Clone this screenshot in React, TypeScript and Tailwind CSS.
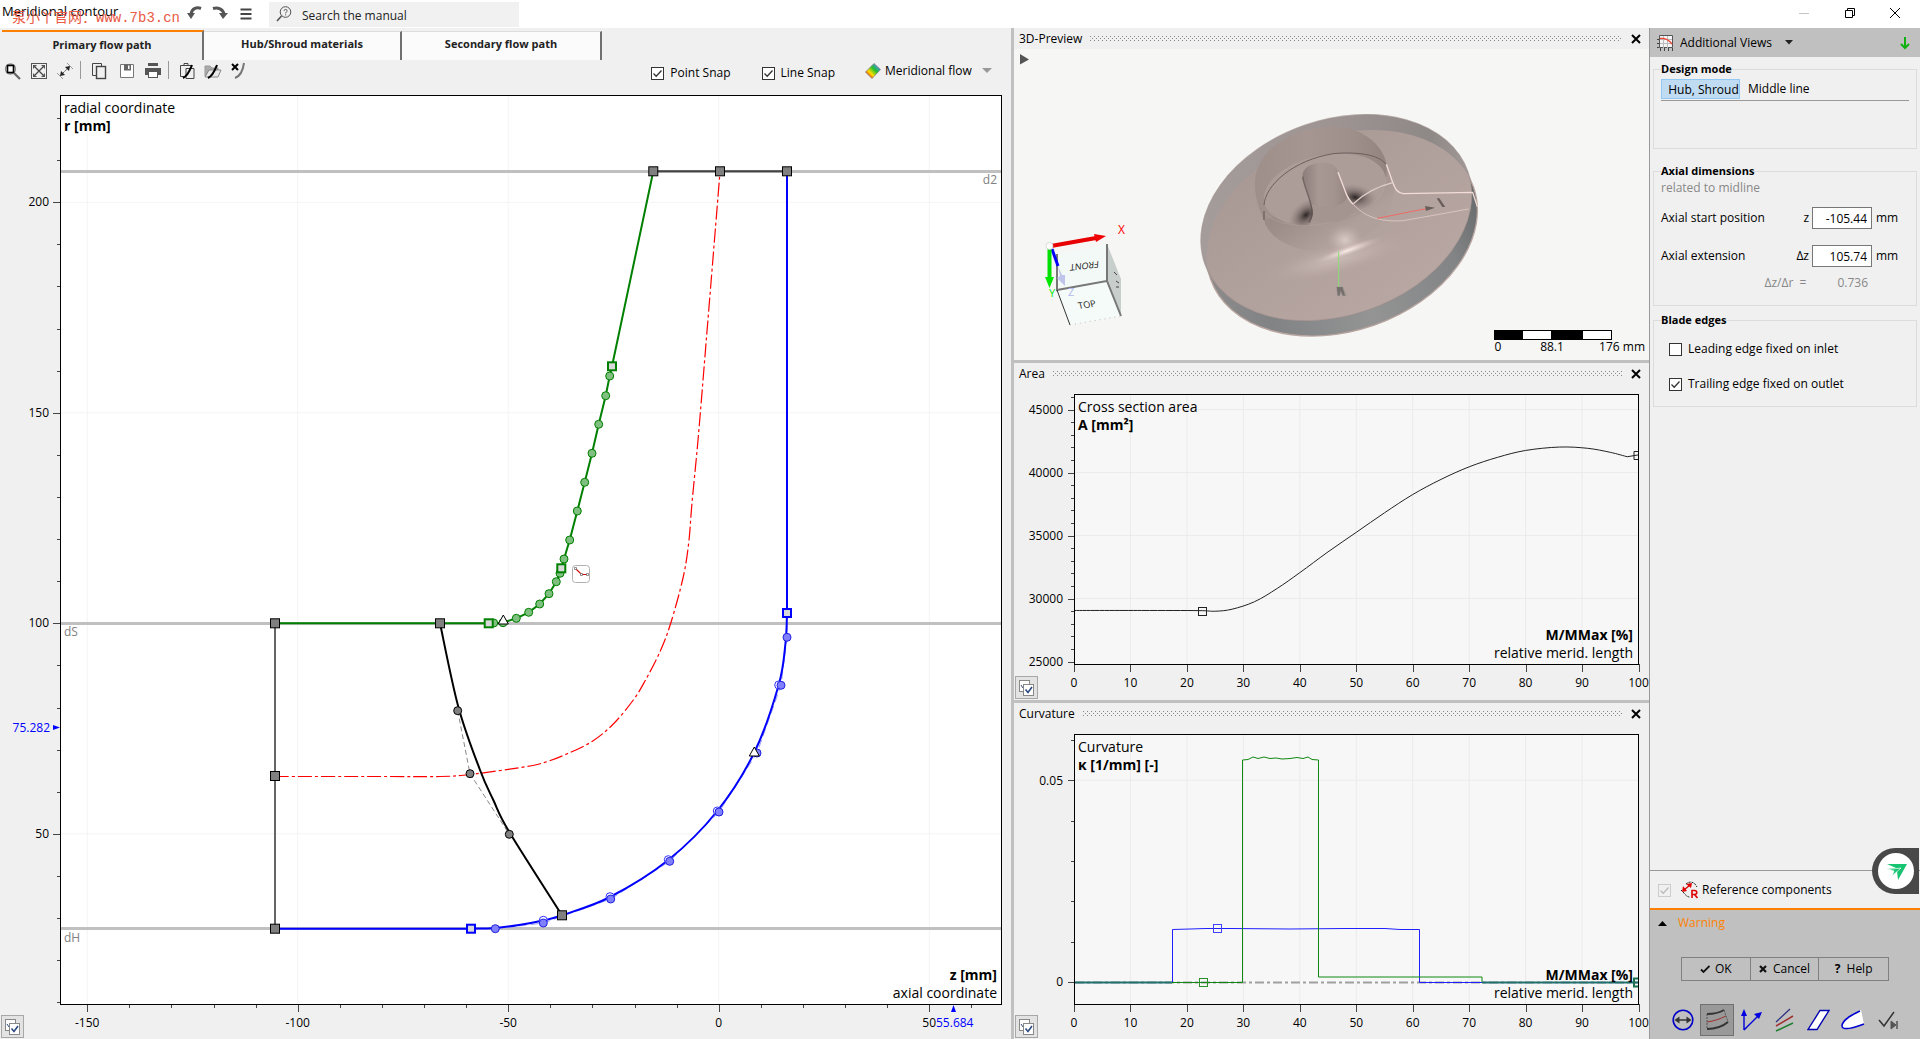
import { useState } from 'react'
import type { ReactNode } from 'react'

type Pt = [number, number]

const LEFT_R = [200, 150, 100, 50]
const LEFT_Z = [-150, -100, -50, 0, 50]
const PERCENT = [0, 10, 20, 30, 40, 50, 60, 70, 80, 90, 100]

const zx = (z: number) => 718.7 + z * 4.21
const ry = (r: number) => 623.3 - (r - 100) * 4.21
const px = (p: number) => 1074 + p * 5.645
const ay = (a: number) => 661.5 - (a - 25000) * 0.0126
const ky = (k: number) => 982 - k * 4034

// Catmull-Rom through the given points
function smooth(pts: Pt[]): string {
  let d = `M${pts[0][0]},${pts[0][1]}`
  for (let i = 0; i < pts.length - 1; i++) {
    const a = pts[i - 1] ?? pts[i]
    const b = pts[i]
    const c = pts[i + 1]
    const e = pts[i + 2] ?? c
    d += ` C${b[0] + (c[0] - a[0]) / 6},${b[1] + (c[1] - a[1]) / 6} ${c[0] - (e[0] - b[0]) / 6},${c[1] - (e[1] - b[1]) / 6} ${c[0]},${c[1]}`
  }
  return d
}

const poly = (pts: Pt[]) => pts.map((p) => p.join(',')).join(' ')

const SHROUD: Pt[] = [
  [493.7, 623], [503, 622.7], [516.3, 618.3], [528.7, 612.3], [539.7, 604], [549, 593.7], [556.3, 581.7], [560, 573.3],
  [564, 559], [569.7, 540], [577.3, 511], [584.7, 482.3], [592, 453.3], [598.7, 424.3], [605.7, 395.7], [609.7, 376],
]
const SHROUD_LINE: Pt[] = [[275, 623.3], [488.7, 623.3], ...SHROUD, [612, 366.3], [653.3, 171.3]]
const SHROUD_KNOTS: Pt[] = [[488.7, 623.3], [561.3, 568.3], [612, 366.3]]

const HUB_FIT: Pt[] = [
  [471, 928.7], [495, 928], [519, 925], [543, 920.5], [562, 915.3], [610, 897], [668.3, 860], [717.3, 811],
  [754.5, 752], [778.7, 685], [785.5, 643], [787, 613],
]
const HUB_CTRL: Pt[] = [
  [495.3, 928.7], [543.3, 923], [610.7, 899], [669.7, 861.3], [719, 812], [757, 753], [781, 685.3], [787, 637.3],
]
const HUB_RINGS: Pt[] = [[543.3, 920.3], [610, 896.7], [668.3, 859.7], [717.3, 811], [778.7, 685]]
const HUB_KNOTS: Pt[] = [[471, 928.7], [787, 613]]

const MIDLINE: Pt[] = [
  [275, 776.5], [380, 776.5], [440, 776.5], [470, 774.5], [526, 766.7], [546.7, 761.7], [566.7, 754], [591.7, 741.7],
  [613.3, 724], [633.3, 700], [645, 681], [660, 651.7], [670.7, 623.3], [683, 578], [688.7, 543], [692, 503],
  [698.3, 436.7], [706.3, 340], [718, 196.7], [720, 171.3],
]
const EDGE: Pt[] = [[440, 623.3], [458.3, 706.7], [480, 770], [493.3, 800], [509.3, 832], [562, 915.3]]
const EDGE_CTRL: Pt[] = [[457.7, 710.7], [470, 773.7], [509.3, 834.3]]
const ANCHORS: Pt[] = [
  [653.3, 171.3], [720, 171.3], [787, 171.3], [275, 623.3], [440, 623.3], [275, 776], [275, 928.7], [562, 915.3],
]

const AREA: Pt[] = [
  [0, 29050], [12, 29050], [22, 29040], [25, 28990], [28, 29150], [32, 29750], [36, 30800], [40, 32050], [45, 33700],
  [50, 35250], [55, 36800], [60, 38250], [65, 39450], [70, 40450], [75, 41200], [80, 41750], [86, 42020], [91, 41920],
  [95, 41600], [98, 41250],
]

function Knot({ at, stroke, fill = '#d9d9d9', size = 8 }: { at: Pt; stroke: string; fill?: string; size?: number }) {
  return (
    <rect x={at[0] - size / 2} y={at[1] - size / 2} width={size} height={size} fill={fill} stroke={stroke} strokeWidth={size === 8 ? 2 : 1} />
  )
}

function Triangle({ at }: { at: Pt }) {
  return <path d={`M${at[0]},${at[1] - 6} l5,9 h-10 z`} fill="#fff" stroke="#000" />
}

function MeridionalChart() {
  return (
    <svg viewBox="0 90 1011 949" preserveAspectRatio="xMinYMin meet" className="h-full w-full font-['Open_Sans',sans-serif]">
      <rect x="60.5" y="95.5" width="941" height="909" fill="#fff" />
      <g stroke="#f4f4f4">
        {LEFT_Z.map((z) => <line key={z} x1={zx(z)} x2={zx(z)} y1="96" y2="1004" />)}
        {LEFT_R.map((r) => <line key={r} x1="61" x2="1001" y1={ry(r)} y2={ry(r)} />)}
      </g>
      <g stroke="#c0c0c0" strokeWidth="3">
        <path d="M61,171.5 H1001 M61,623.5 H1001 M61,928.5 H1001" />
      </g>
      <g className="text-[12px]" fill="#808080">
        <text x="997" y="184" textAnchor="end">d2</text>
        <text x="64" y="636">dS</text>
        <text x="64" y="942">dH</text>
      </g>
      <rect x="60.5" y="95.5" width="941" height="909" fill="none" stroke="#000" />

      {/* Axis ticks */}
      <g stroke="#444">
        {Array.from({ length: 22 }, (_, i) => 10 + i * 10).map((r) => (
          <line key={r} x1={r % 50 === 0 ? 53 : 57} x2="60" y1={Math.round(ry(r)) + 0.5} y2={Math.round(ry(r)) + 0.5} />
        ))}
        {Array.from({ length: 22 }, (_, i) => -150 + i * 10).map((z) => (
          <line key={z} x1={Math.round(zx(z)) + 0.5} x2={Math.round(zx(z)) + 0.5} y1="1005" y2={z % 50 === 0 ? 1012 : 1008} />
        ))}
      </g>
      <g className="text-[12px]" fill="#000">
        {LEFT_R.map((r) => <text key={r} x="49" y={ry(r) + 4} textAnchor="end">{r}</text>)}
        {LEFT_Z.map((z) => <text key={z} x={zx(z)} y="1027" textAnchor="middle">{z}</text>)}
      </g>
      <g className="text-[12px]" fill="#00f">
        <text x="50" y="732" textAnchor="end">75.282</text>
        <text x="936" y="1027">55.684</text>
        <path d="M53,725 L60,727.5 L53,730 z M951,1012 L953.5,1005 L956,1012 z" />
      </g>

      {/* Contours */}
      <path d="M275,623.3 V928.7" stroke="#666" strokeWidth="2" />
      <path d="M653,171.3 H787" stroke="#444" strokeWidth="2" />
      <path d={smooth(MIDLINE)} fill="none" stroke="#f00" strokeWidth="1.2" strokeDasharray="14 3 3 3" />
      <polyline points={poly(EDGE_CTRL)} fill="none" stroke="#888" strokeDasharray="5 3" />
      <path d={smooth(EDGE)} fill="none" stroke="#000" strokeWidth="2" />
      <polyline points={poly(SHROUD_LINE)} fill="none" stroke="#008000" strokeWidth="2" />
      <polyline points={poly([HUB_KNOTS[0], ...HUB_CTRL, HUB_KNOTS[1]])} fill="none" stroke="#9a9af5" strokeDasharray="8 4" />
      <path d={`${smooth(HUB_FIT)} V171.3 M275,928.7 H471`} fill="none" stroke="#00f" strokeWidth="2" />

      {SHROUD.map((p, i) => <circle key={i} cx={p[0]} cy={p[1]} r="4" fill="#7fbf7f" stroke="#008000" />)}
      {SHROUD_KNOTS.map((p, i) => <Knot key={i} at={p} stroke="#008000" />)}
      {HUB_RINGS.map((p, i) => <circle key={i} cx={p[0]} cy={p[1]} r="4" fill="#fff" stroke="#3030ff" />)}
      {HUB_CTRL.map((p, i) => <circle key={i} cx={p[0]} cy={p[1]} r="4" fill="#8080ff" stroke="#2020e0" />)}
      {HUB_KNOTS.map((p, i) => <Knot key={i} at={p} stroke="#00f" />)}
      {EDGE_CTRL.map((p, i) => <circle key={i} cx={p[0]} cy={p[1]} r="4" fill="#808080" stroke="#000" />)}
      {ANCHORS.map((p, i) => <Knot key={i} at={p} stroke="#000" fill="#808080" size={9} />)}
      <Triangle at={[503.3, 621]} />
      <Triangle at={[754.3, 753]} />

      {/* Spline mode hint beside the pointer */}
      <rect x="572.5" y="565.5" width="17" height="17" rx="3" fill="#fff" stroke="#b0b0b0" />
      <path d="M575.5,568.5 L581.5,574.5 H588" fill="none" stroke="#d00000" strokeWidth="1.2" />
      <path d="M574.5,567.5 h2 v2 h-2z M580.5,573.5 h2 v2 h-2z M586.5,573.5 h2 v2 h-2z" fill="#fff" stroke="#666" strokeWidth=".7" />

      <text x="64" y="113" className="text-[14px]">radial coordinate</text>
      <text x="64" y="131" className="text-[14px] font-bold">r [mm]</text>
      <text x="997" y="980" textAnchor="end" className="text-[14px] font-bold">z [mm]</text>
      <text x="997" y="998" textAnchor="end" className="text-[14px]">axial coordinate</text>
    </svg>
  )
}

function PercentFrame({ top, bottom, children }: { top: number; bottom: number; children: ReactNode }) {
  return (
    <>
      <rect x="1074.5" y={top + 0.5} width="564" height={bottom - top} fill="#f7f7f7" />
      <g stroke="#ebebeb">
        {PERCENT.slice(1, 10).map((p) => <line key={p} x1={px(p)} x2={px(p)} y1={top + 1} y2={bottom} />)}
      </g>
      <g stroke="#444">
        {PERCENT.map((p) => <line key={p} x1={Math.round(px(p)) + 0.5} x2={Math.round(px(p)) + 0.5} y1={bottom} y2={bottom + 8} />)}
      </g>
      <g className="text-[12px]">
        {PERCENT.map((p) => <text key={p} x={px(p)} y={bottom + 23} textAnchor="middle">{p}</text>)}
      </g>
      {children}
      <rect x="1074.5" y={top + 0.5} width="564" height={bottom - top} fill="none" stroke="#000" />
      <text x="1633" y={bottom - 24} textAnchor="end" className="text-[14px] font-bold">M/MMax [%]</text>
      <text x="1633" y={bottom - 6} textAnchor="end" className="text-[14px]">relative merid. length</text>
    </>
  )
}

function AreaChart() {
  const curve = smooth(AREA.map(([p, a]) => [px(p), ay(a)]))
  return (
    <svg viewBox="1014 384 634 316" preserveAspectRatio="xMinYMin meet" className="h-full w-full font-['Open_Sans',sans-serif]">
      <PercentFrame top={394} bottom={664}>
        <g stroke="#ebebeb">
          {[30000, 35000, 40000, 45000].map((a) => <line key={a} x1="1075" x2="1638" y1={ay(a)} y2={ay(a)} />)}
        </g>
        <g stroke="#444">
          {Array.from({ length: 22 }, (_, i) => 25000 + i * 1000).map((a) => (
            <line key={a} x1={a % 5000 === 0 ? 1068 : 1071} x2="1074" y1={Math.round(ay(a)) + 0.5} y2={Math.round(ay(a)) + 0.5} />
          ))}
        </g>
        <g className="text-[12px]">
          {[25000, 30000, 35000, 40000, 45000].map((a) => <text key={a} x="1063" y={ay(a) + 4} textAnchor="end">{a}</text>)}
        </g>
        <path d={`${curve} L${px(100)},${ay(41400)}`} fill="none" stroke="#222" />
        <rect x="1198.500" y="607.500" width="8" height="8" fill="none" stroke="#222" />
        <path d="M1639,451.500 h-5 v8 h5" fill="none" stroke="#222" />
      </PercentFrame>
      <text x="1078" y="412" className="text-[14px]">Cross section area</text>
      <text x="1078" y="430" className="text-[14px] font-bold">A [mm²]</text>
    </svg>
  )
}

function CurvatureChart() {
  return (
    <svg viewBox="1014 724 634 315" preserveAspectRatio="xMinYMin meet" className="h-full w-full font-['Open_Sans',sans-serif]">
      <PercentFrame top={734} bottom={1004}>
        <line x1="1075" x2="1638" y1={ky(0.05)} y2={ky(0.05)} stroke="#ebebeb" />
        <g stroke="#444">
          {[0, 1, 2, 3, 4, 5, 6].map((k) => (
            <line key={k} x1={k % 5 === 0 ? 1068 : 1071} x2="1074" y1={Math.round(ky(k / 100)) + 0.5} y2={Math.round(ky(k / 100)) + 0.5} />
          ))}
        </g>
        <g className="text-[12px]">
          <text x="1063" y="785" textAnchor="end">0.05</text>
          <text x="1063" y="986" textAnchor="end">0</text>
        </g>
        <path d="M1075,982.500 H1638" stroke="#a0a0a0" strokeWidth="2" strokeDasharray="9 3 3 3" />
        <path d="M1075,982.500 H1172.500 V929.500 L1190,929 L1206,928.500 H1232 L1290,929 L1345,928.500 L1385,928.500 L1400,929.500 H1419.500 V982.500 H1638" fill="none" stroke="#2020ff" />
        <path d="M1075,982.500 H1242.500 V760 L1248,759.500 L1253,757 L1258,758.500 L1264,757 L1270,758.500 L1276,758 L1282,759 L1290,758.500 L1297,757.500 L1303,758.500 L1308,757 L1312,759.500 L1318.500,760 V977 H1482 V982.500 H1638" fill="none" stroke="#118811" />
        <path d="M1075,982.500 H1172 M1482,982.500 H1638" stroke="#207070" strokeWidth="2" />
        <rect x="1213.500" y="924.500" width="8" height="8" fill="none" stroke="#4040ff" />
        <rect x="1199.500" y="978.500" width="8" height="8" fill="none" stroke="#2a902a" />
        <path d="M1639,978.500 h-5 v8 h5" fill="none" stroke="#207050" strokeWidth="2" />
      </PercentFrame>
      <text x="1078" y="752" className="text-[14px]">Curvature</text>
      <text x="1078" y="770" className="text-[14px] font-bold">κ [1/mm] [-]</text>
    </svg>
  )
}

function Preview3D() {
  return (
    <svg viewBox="1014 49 634 311" preserveAspectRatio="xMinYMin meet" className="h-full w-full font-['Open_Sans',sans-serif]">
      <defs>
        <clipPath id="rimA"><ellipse cx="439" cy="338" rx="418" ry="293" transform="rotate(-19.3 439 338)" /></clipPath>
        <clipPath id="eye"><ellipse cx="405" cy="254" rx="186" ry="104" transform="rotate(-12 405 254)" /></clipPath>
        <linearGradient id="rimTop"><stop offset="0" stopColor="#a59d9b" /><stop offset=".5" stopColor="#9d9492" /><stop offset=".8" stopColor="#8e8886" /><stop offset="1" stopColor="#aaa29f" /></linearGradient>
        <linearGradient id="rimBottom"><stop offset="0" stopColor="#8b8a8b" /><stop offset=".15" stopColor="#818385" /><stop offset=".5" stopColor="#949494" /><stop offset=".85" stopColor="#828485" /><stop offset="1" stopColor="#696c6e" /></linearGradient>
        <linearGradient id="face" x1="0" y1="0" x2=".4" y2="1"><stop offset="0" stopColor="#a79793" /><stop offset=".5" stopColor="#b0a09c" /><stop offset="1" stopColor="#b7a6a2" /></linearGradient>
        <linearGradient id="cyl"><stop offset="0" stopColor="#9f8f8b" /><stop offset=".4" stopColor="#a69692" /><stop offset=".75" stopColor="#9f8f8b" /><stop offset="1" stopColor="#938480" /></linearGradient>
        <linearGradient id="belly" x1="0" y1="0" x2=".7" y2=".7"><stop offset=".2" stopColor="#94857f" /><stop offset=".6" stopColor="#9e8e8a" /><stop offset="1" stopColor="#b0a09c" /></linearGradient>
        <linearGradient id="shaft"><stop offset="0" stopColor="#8b7d7a" /><stop offset=".35" stopColor="#a89894" /><stop offset=".7" stopColor="#a39490" /><stop offset="1" stopColor="#93847f" /></linearGradient>
        <radialGradient id="glow"><stop offset="0" stopColor="#fff4f0" /><stop offset=".4" stopColor="#e8d7d2" stopOpacity=".7" /><stop offset="1" stopColor="#b7a6a2" stopOpacity="0" /></radialGradient>
        <radialGradient id="shade"><stop offset="0" stopColor="#2b2523" /><stop offset=".4" stopColor="#5b4f4c" stopOpacity=".6" /><stop offset="1" stopColor="#8b7d7a" stopOpacity="0" /></radialGradient>
      </defs>
      <g transform="translate(1190 105) scale(.33333)">
        <ellipse cx="439" cy="338" rx="418" ry="293" transform="rotate(-19.3 439 338)" fill="url(#rimTop)" stroke="#d6d2cf" strokeWidth="4" />
        <ellipse cx="456" cy="384" rx="418" ry="293" transform="rotate(-19.3 456 384)" fill="url(#rimBottom)" stroke="#b9a5a0" strokeWidth="4" />
        <g clipPath="url(#rimA)">
          <rect width="900" height="720" fill="url(#rimTop)" />
          <ellipse cx="456" cy="384" rx="418" ry="293" transform="rotate(-19.3 456 384)" fill="url(#face)" />
        </g>
        <ellipse cx="439" cy="338" rx="418" ry="293" transform="rotate(-19.3 439 338)" fill="none" stroke="#9b8c88" strokeWidth="3" opacity=".5" />

        {/* Inlet cylinder and shroud belly */}
        <path d="M222,345 L590,180 L612,235 C615,300 585,355 530,390 C470,430 390,445 330,432 C270,415 232,385 222,345 z" fill="url(#belly)" />
        <path d="M222,345 C190,275 180,210 225,150 C290,75 430,40 515,85 C560,110 585,145 590,180 L588,225 L400,260 z" fill="url(#cyl)" />
        <ellipse cx="440" cy="462" rx="230" ry="50" transform="rotate(-14 440 462)" fill="url(#glow)" opacity=".3" />
        <ellipse cx="465" cy="405" rx="60" ry="50" fill="url(#glow)" opacity=".5" />
        <ellipse cx="472" cy="437" rx="120" ry="17" transform="rotate(-20 472 437)" fill="url(#glow)" opacity=".9" />
        <ellipse cx="405" cy="254" rx="186" ry="104" transform="rotate(-12 405 254)" fill="#ad9d99" />
        <g clipPath="url(#eye)">
          <ellipse cx="348" cy="330" rx="62" ry="40" transform="rotate(-42 348 330)" fill="url(#shade)" />
          <ellipse cx="496" cy="277" rx="66" ry="40" transform="rotate(10 496 277)" fill="url(#shade)" />
          <path d="M362,290 C374,322 370,345 352,372 L560,370 L545,322 C515,322 490,300 480,285 L440,210 z" fill="#a79793" />
        </g>
        <path d="M222,300 C226,240 310,165 430,146 C520,138 575,155 589,180" fill="none" stroke="#6b5e5b" strokeWidth="3" />
        <path d="M222,322 C250,355 310,365 380,360 C450,350 520,320 560,285 C580,265 590,235 588,215" fill="none" stroke="#bbaaa6" strokeWidth="2" opacity=".6" />
        <path d="M338,215 C335,185 375,170 410,174 C430,176 442,188 444,202 L474,275 C460,310 400,315 364,300 z" fill="url(#shaft)" />
        <path d="M364,298 C400,315 460,310 474,273 L490,300 C500,320 480,340 440,350 L362,350 C372,332 372,315 364,298 z" fill="#a59591" />
        <path d="M338,215 C340,240 360,275 366,315 C368,330 364,342 356,352" fill="none" stroke="#4c4240" strokeWidth="4" opacity=".6" />
        <path d="M222,318 L222,345" stroke="#5c504d" strokeWidth="3" />

        {/* Meridional section */}
        <g fill="none" stroke="#f1dcd7" strokeWidth="4">
          <path d="M444,202 L468,265 C476,285 484,293 490,298" />
          <path d="M589,178 L608,232 C615,252 622,264 640,266 L848,262 L862,305" />
          <path d="M490,296 C520,268 560,245 608,233" stroke="#e2cfca" />
          <path d="M490,298 C520,330 560,352 640,347 L836,312" stroke="#d9c5bf" strokeWidth="3" />
        </g>
        <path d="M562,340 L708,311" stroke="#f06a64" strokeWidth="3" />
        <path d="M705,303 L735,308 L708,318 z M740,280 h8 l18,26 h-9 z" fill="#6a5e5b" />
        <path d="M446,440 V548" stroke="#8ade72" strokeWidth="3" />
        <path d="M440,546 h18 l8,26 h-8 l-6,-14 l-3,14 h-6 z M464,556 l6,16" fill="#75706c" stroke="#8b8682" />
      </g>

      {/* Orientation cube */}
      <path d="M1057,254 L1107,244 V281 L1057,290 z" fill="#f3f9f6" />
      <path d="M1057,290 L1107,281 L1121,316 L1070,325 z" fill="#f5fbf8" />
      <path d="M1107,244 L1121,279 V316 L1107,281 z" fill="#c8cecb" />
      <path d="M1057,254 V290 L1107,281 V244 M1107,281 L1121,316" fill="none" stroke="#777" strokeWidth="2" />
      <path d="M1057,290 L1070,325" stroke="#333" />
      <path d="M1070,325 L1121,316" stroke="#bbb" strokeDasharray="1 4" />
      <text transform="matrix(-1 .12 .05 -1 1099 261)" className="text-[9px]" fill="#222">FRONT</text>
      <text transform="matrix(1 -.14 .25 1 1079 309)" className="text-[9px]" fill="#222">TOP</text>
      <path d="M1114,272 l3,3 M1116,281 l3,2 M1116,287 h3" stroke="#444" />
      <path d="M1052,249 L1058,266" stroke="#00f" strokeWidth="3" />
      <path d="M1058,266 L1060,276 L1057,278 L1065,286 L1065,275 L1062,275 z" fill="#bfc4ec" />
      <path d="M1051,246 L1096,238" stroke="#e80000" strokeWidth="4" />
      <path d="M1094,234 L1106,236 L1096,242 z" fill="#f00000" />
      <path d="M1049.500,248 V278" stroke="#00e000" strokeWidth="4" />
      <path d="M1045,277 H1054 L1049.500,288 z" fill="#00e800" />
      <circle cx="1049.500" cy="246" r="3.500" fill="#fff" stroke="#ccc" strokeWidth=".7" />
      <text x="1118" y="234" className="text-[12px]" fill="#f00">X</text>
      <text x="1049" y="297" className="text-[11px]" fill="#00e800">Y</text>
      <text x="1068" y="296" className="text-[11px]" fill="#b4baf0">Z</text>

      {/* Scale bar */}
      <rect x="1494.500" y="330.500" width="117" height="9" fill="#fff" stroke="#000" />
      <path d="M1494,330 h29 v10 h-29z M1551,330 h32 v10 h-32z" />
      <g className="text-[12px]">
        <text x="1498" y="351" textAnchor="middle">0</text>
        <text x="1552" y="351" textAnchor="middle">88.1</text>
        <text x="1645" y="351" textAnchor="end">176 mm</text>
      </g>
      <path d="M1020,54 V64.500 L1029,59.500 z" fill="#555" />
    </svg>
  )
}

function CheckBox({ id, label, initial, disabled }: { id: string; label: ReactNode; initial: boolean; disabled?: boolean }) {
  const [on, setOn] = useState(initial)
  return (
    <div className="flex items-center gap-[6px]">
      <span className="relative flex">
        <input
          id={id}
          type="checkbox"
          checked={on}
          disabled={disabled}
          onChange={() => setOn(!on)}
          className="size-[13px] appearance-none border border-[#333] bg-white disabled:border-[#ccc] disabled:bg-[#f0f0f0]"
        />
        {on && (
          <svg viewBox="0 0 13 13" className="pointer-events-none absolute inset-0 size-[13px]">
            <path d="M2.500,6.500 L5.200,9.200 L10.500,3.500" fill="none" stroke={disabled ? '#bbb' : '#333'} strokeWidth="1.300" />
          </svg>
        )}
      </span>
      <label htmlFor={id} className="flex items-center">{label}</label>
    </div>
  )
}

function IconButton({ label, width, children }: { label: string; width: string; children: ReactNode }) {
  return (
    <button type="button" aria-label={label} className={`flex h-5 items-center justify-center ${width}`}>
      <svg viewBox="0 0 18 18" className="size-[18px]" fill="none" stroke="#444">{children}</svg>
    </button>
  )
}

function DockPanel({ title, body, children }: { title: string; body: string; children: ReactNode }) {
  const id = `dots-${title}`
  return (
    <section className="flex min-h-0 min-w-0 flex-col">
      <header className="flex h-[21px] shrink-0 items-center gap-2 pr-[7px] pl-[5px]">
        <h2>{title}</h2>
        <svg className="h-[6px] min-w-0 flex-1">
          <pattern id={id} width="4" height="4" patternUnits="userSpaceOnUse">
            <rect width="1" height="1" fill="#888" />
            <rect x="2" y="2" width="1" height="1" fill="#888" />
          </pattern>
          <rect width="100%" height="6" fill={`url(#${id})`} />
        </svg>
        <button type="button" aria-label={`Close ${title}`} className="flex size-3 items-center justify-center">
          <svg viewBox="0 0 10 10" className="size-[10px]"><path d="M1,1 L9,9 M9,1 L1,9" stroke="#000" strokeWidth="2" /></svg>
        </button>
      </header>
      <div className={`relative min-h-0 flex-1 ${body}`}>{children}</div>
    </section>
  )
}

function LayersButton() {
  return (
    <button type="button" aria-label="Displayed curves" className="absolute bottom-px left-px flex size-[23px] items-center justify-center border border-[#a8a8a8] bg-[#e3e3e3]">
      <svg viewBox="0 0 18 18" className="size-[18px]" fill="#fff" stroke="#888">
        <rect x="1.500" y="1.500" width="10" height="11" />
        <path d="M3,6 l2,3" stroke="#2d4a80" />
        <rect x="5.500" y="5.500" width="10" height="11" />
        <path d="M7.500,10.500 L10,13.500 L14,8" fill="none" stroke="#2d4a80" strokeWidth="1.600" />
      </svg>
    </button>
  )
}

function TitleBar() {
  return (
    <header className="flex h-7 shrink-0 items-center bg-white">
      <div className="relative h-full w-[187px]">
        <h1 className="absolute top-[2px] left-[2px] text-[13px] leading-[18px] whitespace-nowrap">Meridional contour</h1>
        <span className="absolute top-[10px] left-3 font-['Liberation_Mono','Noto_Sans_CJK_SC',monospace] text-[14px] leading-4 whitespace-nowrap text-[#ea5a45]">泵小丫官网：www.7b3.cn</span>
      </div>
      <IconButton label="Undo" width="w-[18px]">
        <path d="M4,9 C5,3 10,2 14,3.500" stroke="#555" strokeWidth="3" />
        <path d="M0,8 L4,14 L8,8 z" fill="#555" stroke="none" />
      </IconButton>
      <IconButton label="Redo" width="ml-[6px] w-[18px]">
        <path d="M2,3.500 C7,2 12,4 13,9" stroke="#555" strokeWidth="3" />
        <path d="M8,8 L12,14 L17,8 z" fill="#555" stroke="none" />
      </IconButton>
      <IconButton label="Menu" width="ml-2 w-[18px]">
        <path d="M3.500,4.500 h11 M3.500,9 h11 M3.500,13.500 h11" stroke="#444" strokeWidth="2" />
      </IconButton>
      <div className="ml-[14px] flex h-[25px] w-[250px] items-center gap-[10px] bg-[#f1f1f1] pl-[7px]">
        <svg viewBox="0 0 16 16" className="size-4" fill="none" stroke="#555">
          <circle cx="9.500" cy="6" r="5.300" />
          <path d="M5.500,10 L1,15" strokeWidth="1.600" />
          <path d="M8,4.800 C8,3 11.200,3 11.200,4.800 C11.200,6 9.600,6 9.600,7.400 M9.600,8.400 v1" />
        </svg>
        <input aria-label="Search the manual" placeholder="Search the manual" className="min-w-0 flex-1 bg-transparent pt-[3px] outline-none placeholder:text-[#222]" />
      </div>
      <div className="ml-auto flex pr-[2px] pb-[2px]">
        <button type="button" aria-label="Minimize" className="flex h-5 w-[46px] items-center justify-center">
          <svg viewBox="0 0 10 10" className="size-[10px]"><path d="M0,5.500 H10" stroke="#c4c4c4" /></svg>
        </button>
        <button type="button" aria-label="Restore" className="flex h-5 w-[45px] items-center justify-center">
          <svg viewBox="0 0 10 10" className="size-[10px]" fill="none" stroke="#000"><path d="M.5,2.500 h7 v7 h-7z M2.500,2.500 v-2 h7 v7 h-2" /></svg>
        </button>
        <button type="button" aria-label="Close" className="flex h-5 w-[46px] items-center justify-center">
          <svg viewBox="0 0 10 10" className="size-[10px]"><path d="M0,0 L10,10 M10,0 L0,10" stroke="#000" /></svg>
        </button>
      </div>
    </header>
  )
}

function Tabs() {
  return (
    <div role="tablist" className="flex h-8 shrink-0 items-end pl-[2px] text-[11px] font-bold text-[#222]">
      <button type="button" role="tab" aria-selected="true" className="h-[30px] w-[202px] border-t-2 border-r-2 border-t-[#ff8000] border-r-[#707070] pb-px">Primary flow path</button>
      <button type="button" role="tab" className="h-[29px] w-[198px] border-t border-r-2 border-t-[#ddd] border-r-[#707070] bg-[#fbfbfb] pb-1">Hub/Shroud materials</button>
      <button type="button" role="tab" className="h-[29px] w-[200px] border-t border-r-2 border-t-[#ddd] border-r-[#707070] bg-[#fbfbfb] pb-1">Secondary flow path</button>
    </div>
  )
}

function Toolbar() {
  return (
    <div className="flex h-[30px] shrink-0 items-start pt-[1px]">
      <IconButton label="Zoom" width="w-6">
        <path d="M11,11 L17,17" strokeWidth="2.200" stroke="#666" />
        <circle cx="7.500" cy="7" r="5" strokeWidth="1.300" fill="#ddd" stroke="#888" />
        <rect x="4.500" y="3.500" width="6" height="7" strokeWidth="1.600" stroke="#000" fill="#fff" />
      </IconButton>
      <IconButton label="Fit view" width="ml-[3px] w-6">
        <rect x="1.500" y="1.500" width="15" height="15" stroke="#555" />
        <path d="M5,5 L13,13 M13,5 L5,13" strokeWidth="1.200" />
        <path d="M3,3 h4 l-4,4z M15,3 h-4 l4,4z M3,15 h4 l-4,-4z M15,15 h-4 l4,-4z" fill="#555" stroke="none" />
      </IconButton>
      <IconButton label="Measure" width="ml-[2px] w-6">
        <path d="M5,13 L13,5" strokeDasharray="2 1" />
        <path d="M4,14 l1,-5 l4,4z M14,4 l-5,1 l4,4z" fill="#222" stroke="none" />
        <path d="M1,11 l6,6 M11,1 l6,6" stroke="#999" />
      </IconButton>
      <span className="mx-[3px] h-[18px] w-px self-start bg-[#999]" />
      <IconButton label="Copy" width="ml-[2px] w-[28px]">
        <path d="M5,13.500 H1.500 V1.500 H10.500 V4" />
        <rect x="5.500" y="4.500" width="9" height="12" strokeWidth="1.400" />
      </IconButton>
      <IconButton label="Save" width="w-[25px]">
        <path d="M2.500,2.500 h13 v13 h-13z" fill="#fff" stroke="#777" />
        <path d="M6,2.500 h7 v6 h-7z" fill="#666" stroke="none" />
        <path d="M10,3.500 h1.500 v3.500 h-1.500z" fill="#fff" stroke="none" />
      </IconButton>
      <IconButton label="Print" width="w-[27px]">
        <path d="M4,1 h10 v3 h-10z M1,6 h16 v7 h-16z" fill="#555" stroke="none" />
        <rect x="4.500" y="9.500" width="9" height="6" fill="#fff" stroke="#555" />
      </IconButton>
      <span className="mr-1 ml-[2px] h-[18px] w-px self-start bg-[#999]" />
      <IconButton label="Paste curve" width="w-[27px]">
        <path d="M6,14.500 H2.500 V3.500 H13 M8,6.500 h8 v10 h-8z M6,1.500 h4 v2 h-4z" />
        <path d="M14,3 C12,8 10,14 5,16" stroke="#000" strokeWidth="2" />
      </IconButton>
      <IconButton label="Open curve" width="w-[25px]">
        <path d="M1,14 V4 h5 l2,2 h6 v3" fill="#aaa" stroke="#999" />
        <path d="M1,15 L5,8 H17 L14,15 z" fill="#e8e8e8" stroke="#888" />
        <path d="M13,3 C11,8 9,14 4,16" stroke="#000" strokeWidth="2" />
      </IconButton>
      <IconButton label="Delete curve" width="w-6">
        <path d="M4,2 l6,6 M10,2 l-6,6" stroke="#000" strokeWidth="2" />
        <path d="M16,1 C15,8 13,14 7,16" stroke="#777" strokeWidth="2" />
      </IconButton>
      <div className="ml-auto flex pr-[19px]">
        <div className="flex gap-[31px] pt-[2px] leading-5">
          <CheckBox id="point-snap" label="Point Snap" initial />
          <CheckBox id="line-snap" label="Line Snap" initial />
        </div>
        <div className="ml-[30px] flex h-5 items-center gap-1">
          <svg viewBox="0 0 16 16" className="size-4">
            <defs>
              <linearGradient id="rainbow" x1="0" y1="1" x2="1" y2="0">
                <stop offset=".1" stopColor="#e00000" /><stop offset=".35" stopColor="#ffe000" /><stop offset=".6" stopColor="#20c030" /><stop offset=".85" stopColor="#5090f0" />
              </linearGradient>
            </defs>
            <path d="M.5,9 L9,.5 L15.500,6.500 L7,15.500 z" fill="url(#rainbow)" stroke="#777" strokeWidth=".7" />
          </svg>
          <select aria-label="Meridional flow" className="w-[93px] appearance-none bg-transparent">
            <option>Meridional flow</option>
          </select>
          <svg viewBox="0 0 10 6" className="h-[6px] w-[10px]"><path d="M0,0 H10 L5,5 z" fill="#999" /></svg>
        </div>
      </div>
    </div>
  )
}

function Group({ title, className, children }: { title: string; className: string; children: ReactNode }) {
  return (
    <fieldset className={`mr-[3px] ml-[3px] border border-[#dcdcdc] px-[7px] ${className}`}>
      <legend className="text-[11px] leading-4 font-bold">{title}</legend>
      {children}
    </fieldset>
  )
}

function DimensionRow({ id, label, symbol, value }: { id: string; label: string; symbol: string; value: string }) {
  return (
    <div className="flex h-[38px] items-center">
      <label htmlFor={id} className="flex flex-1 justify-between pr-[3px]"><span>{label}</span><span>{symbol}</span></label>
      <input id={id} defaultValue={value} className="h-[22px] w-[60px] border border-[#777] bg-white pr-1 text-right" />
      <span className="w-[37px] pl-1">mm</span>
    </div>
  )
}

function SideIcon({ label, children }: { label: string; children: ReactNode }) {
  return (
    <button type="button" aria-label={label} className="flex h-8 w-[34px] items-center justify-center">
      <svg viewBox="0 0 24 24" className="size-6" fill="none">{children}</svg>
    </button>
  )
}

function SidePanel() {
  return (
    <aside className="relative flex min-h-0 flex-col border-l border-[#999]">
      <div className="flex h-[29px] shrink-0 items-center bg-[#c0c0c0] pr-[10px] pl-[7px]">
        <svg viewBox="0 0 17 17" className="size-[17px]" fill="none">
          <path d="M2.500,1.500 h13 v12 h-13z" fill="#f4f4f4" stroke="#555" />
          <path d="M6.500,2 v12 M10.500,2 v12 M3,5.500 h12 M3,9.500 h12" stroke="#bbb" />
          <path d="M0,5.500 h2 M0,9.500 h2 M0,13.500 h2 M3.500,14 v3 M7.500,14 v3 M11.500,14 v3 M15.500,14 v3" stroke="#444" />
          <path d="M3,4.500 C8,4 12,6 15,10" stroke="#f04030" strokeWidth="1.300" />
        </svg>
        <select aria-label="Additional Views" className="ml-[6px] w-[105px] appearance-none bg-transparent">
          <option>Additional Views</option>
        </select>
        <svg viewBox="0 0 8 5" className="h-[5px] w-2"><path d="M0,0 H8 L4,4.500 z" fill="#222" /></svg>
        <button type="button" aria-label="Dock" className="ml-auto">
          <svg viewBox="0 0 10 14" className="h-[14px] w-[10px]" fill="none" stroke="#10b010" strokeWidth="2"><path d="M5,1 V12 M1,8 L5,12 L9,8" /></svg>
        </button>
      </div>

      <Group title="Design mode" className="mt-1 h-[88px]">
        <div className="flex items-start gap-2 border-b border-[#999] pb-px">
          <button type="button" className="mt-[2px] h-5 w-[79px] border border-[#90c8f6] bg-[#bfdcf3] pt-px pl-[6px]">Hub, Shroud</button>
          <button type="button" className="mt-[2px] h-5">Middle line</button>
        </div>
      </Group>

      <Group title="Axial dimensions" className="mt-[14px] h-[143px]">
        <p className="mt-px mb-[3px] leading-4 text-[#888]">related to midline</p>
        <DimensionRow id="z-start" label="Axial start position" symbol="z" value="-105.44" />
        <DimensionRow id="dz" label="Axial extension" symbol="Δz" value="105.74" />
        <div className="flex justify-end pr-[41px] leading-4 text-[#888]">
          <span className="pr-[31px] whitespace-pre">Δz/Δr  =</span>
          <output>0.736</output>
        </div>
      </Group>

      <Group title="Blade edges" className="mt-[6px] h-[95px]">
        <div className="flex flex-col gap-[17px] pt-3 pl-2 leading-[18px]">
          <CheckBox id="leading" label="Leading edge fixed on inlet" initial={false} />
          <CheckBox id="trailing" label="Trailing edge fixed on outlet" initial />
        </div>
      </Group>

      <div className="mt-auto flex h-[38px] items-center border-t border-[#999] pt-px pl-[8px]">
        <CheckBox
          id="reference"
          disabled
          initial
          label={
            <>
              <svg viewBox="0 0 18 18" className="mr-[4px] ml-[3px] size-[18px]" fill="none">
                <path d="M6,3 C9,0 13,1 15,3 L17,6 M1,9 L4,12 C6,15 8,16 10,16" stroke="#222" strokeDasharray="2 1" />
                <path d="M4,9 L10,4" stroke="#e00000" strokeWidth="1.300" />
                <path d="M2,11 l1,-6 l4,5z M12,2 l-6,1 l5,4z" fill="#e00000" />
                <path d="M12,17 V9.500 h2.500 c3,0 3,4 0,4 h-2.500 M14.500,13.500 l3,3.500" stroke="#e00000" strokeWidth="1.600" />
              </svg>
              Reference components
            </>
          }
        />
      </div>

      <div className="h-[131px] border-t-2 border-[#ff8000] bg-[#c0c0c0]">
        <button type="button" className="mt-1 ml-2 flex h-[18px] items-center gap-[11px] text-[#ff8000]">
          <svg viewBox="0 0 9 5" className="h-[5px] w-[9px]"><path d="M0,5 L4.500,0 L9,5 z" fill="#000" /></svg>
          Warning
        </button>
        <div className="mt-[25px] ml-[31px] grid h-6 w-[208px] grid-cols-3 divide-x divide-[#808080] border border-[#808080]">
          <button type="button" className="flex items-center justify-center gap-[5px]">
            <svg viewBox="0 0 10 8" className="h-2 w-[10px]"><path d="M1,4.500 L3.500,7 L9.500,1" fill="none" stroke="#111" strokeWidth="1.800" /></svg>
            OK
          </button>
          <button type="button" className="flex items-center justify-center gap-[6px]">
            <svg viewBox="0 0 8 8" className="size-2"><path d="M1,1 L7,7 M7,1 L1,7" stroke="#111" strokeWidth="2.200" /></svg>
            Cancel
          </button>
          <button type="button" className="flex items-center justify-center gap-[6px]"><b>?</b>Help</button>
        </div>
        <div className="mt-[23px] flex pl-4">
          <SideIcon label="Main dimensions">
            <circle cx="12" cy="12" r="9.800" stroke="#0000c8" strokeWidth="1.600" />
            <path d="M5,12 H19" stroke="#333" strokeWidth="1.500" />
            <path d="M3.500,12 l5,-3.500 v7z M20.500,12 l-5,-3.500 v7z" fill="#333" />
          </SideIcon>
          <button type="button" aria-label="Meridional contour" aria-pressed="true" className="flex h-8 w-[34px] items-center justify-center border border-[#707070] bg-[#999]">
            <svg viewBox="0 0 24 24" className="size-6" fill="none">
              <path d="M2,6 C9,6 14,5 19,2 M2,21 C10,21 17,19 23,14" stroke="#333" strokeWidth="2" />
              <path d="M2,14 C9,13 15,11 21,8" stroke="#a03030" />
              <path d="M2,6 V21 M19,2 L23,14" stroke="#555" strokeDasharray="2 1" />
            </svg>
          </button>
          <SideIcon label="Blade properties">
            <path d="M5,22 V4 M5,22 L20,7" stroke="#0000d8" strokeWidth="1.400" />
            <path d="M2,8 L5,1 L8,8 z M23,4 L20,11 L15,6 z" fill="#0000e0" />
          </SideIcon>
          <SideIcon label="Blade mean lines">
            <path d="M3,14 L17,1" stroke="#303080" strokeWidth="1.300" />
            <path d="M3,18 L20,8" stroke="#a03030" strokeWidth="1.500" />
            <path d="M3,23 L20,15" stroke="#208030" strokeWidth="1.500" />
          </SideIcon>
          <SideIcon label="Blade profiles">
            <path d="M1,21.500 L13,2.500 H22 L10,21.500 z" fill="#fff" stroke="#0000b0" strokeWidth="1.400" />
          </SideIcon>
          <SideIcon label="Blade edges">
            <path d="M20,2 C10,7 1,13 1,18 C1,23 13,20 23,16 z" fill="#fff" />
            <path d="M19,3 C10,7 1,13 1,18 C1,23 13,20 23,16" stroke="#0000d0" strokeWidth="1.500" />
          </SideIcon>
          <SideIcon label="Finish">
            <path d="M4,12 L9,18 L19,4" stroke="#333" strokeWidth="1.500" />
            <path d="M16,13 V21 L21,17 z" fill="#555" stroke="#555" />
            <path d="M22,13 V21" stroke="#555" strokeWidth="1.500" />
          </SideIcon>
        </div>
      </div>

      <button type="button" aria-label="Assistant" className="absolute right-px bottom-[145px] flex h-[46px] w-[47px] items-center rounded-l-full bg-[#484848] pl-[6px]">
        <svg viewBox="0 0 36 36" className="size-9">
          <circle cx="18" cy="18" r="18" fill="#fff" />
          <path d="M9,11 H29 L20,27 L19,18 L9,16 L18,15 z" fill="#16c472" />
          <path d="M10,16.500 L23,15 L14,23 L16,18 z" fill="#16c472" stroke="#fff" strokeWidth=".7" />
        </svg>
      </button>
    </aside>
  )
}

export default function App() {
  return (
    <div className="flex h-screen flex-col overflow-hidden bg-[#f0f0f0] font-['Open_Sans','Noto_Sans_CJK_SC',sans-serif] text-[12px] text-black">
      <TitleBar />
      <div className="grid min-h-0 flex-1 grid-cols-[1011fr_638fr_271px]">
        <main className="flex min-h-0 min-w-0 flex-col">
          <Tabs />
          <Toolbar />
          <div className="relative min-h-0 flex-1">
            <MeridionalChart />
            <LayersButton />
          </div>
        </main>

        <div className="grid min-h-0 min-w-0 grid-rows-[332fr_340fr_339fr] border-l-3 border-[#c0c0c0]">
          <DockPanel title="3D-Preview" body="bg-[#f6f6f4]"><Preview3D /></DockPanel>
          <div className="grid min-h-0 border-t-3 border-[#c0c0c0]">
            <DockPanel title="Area" body="">
              <AreaChart />
              <LayersButton />
            </DockPanel>
          </div>
          <div className="grid min-h-0 border-t-3 border-[#c0c0c0]">
            <DockPanel title="Curvature" body="">
              <CurvatureChart />
              <LayersButton />
            </DockPanel>
          </div>
        </div>

        <SidePanel />
      </div>
    </div>
  )
}
